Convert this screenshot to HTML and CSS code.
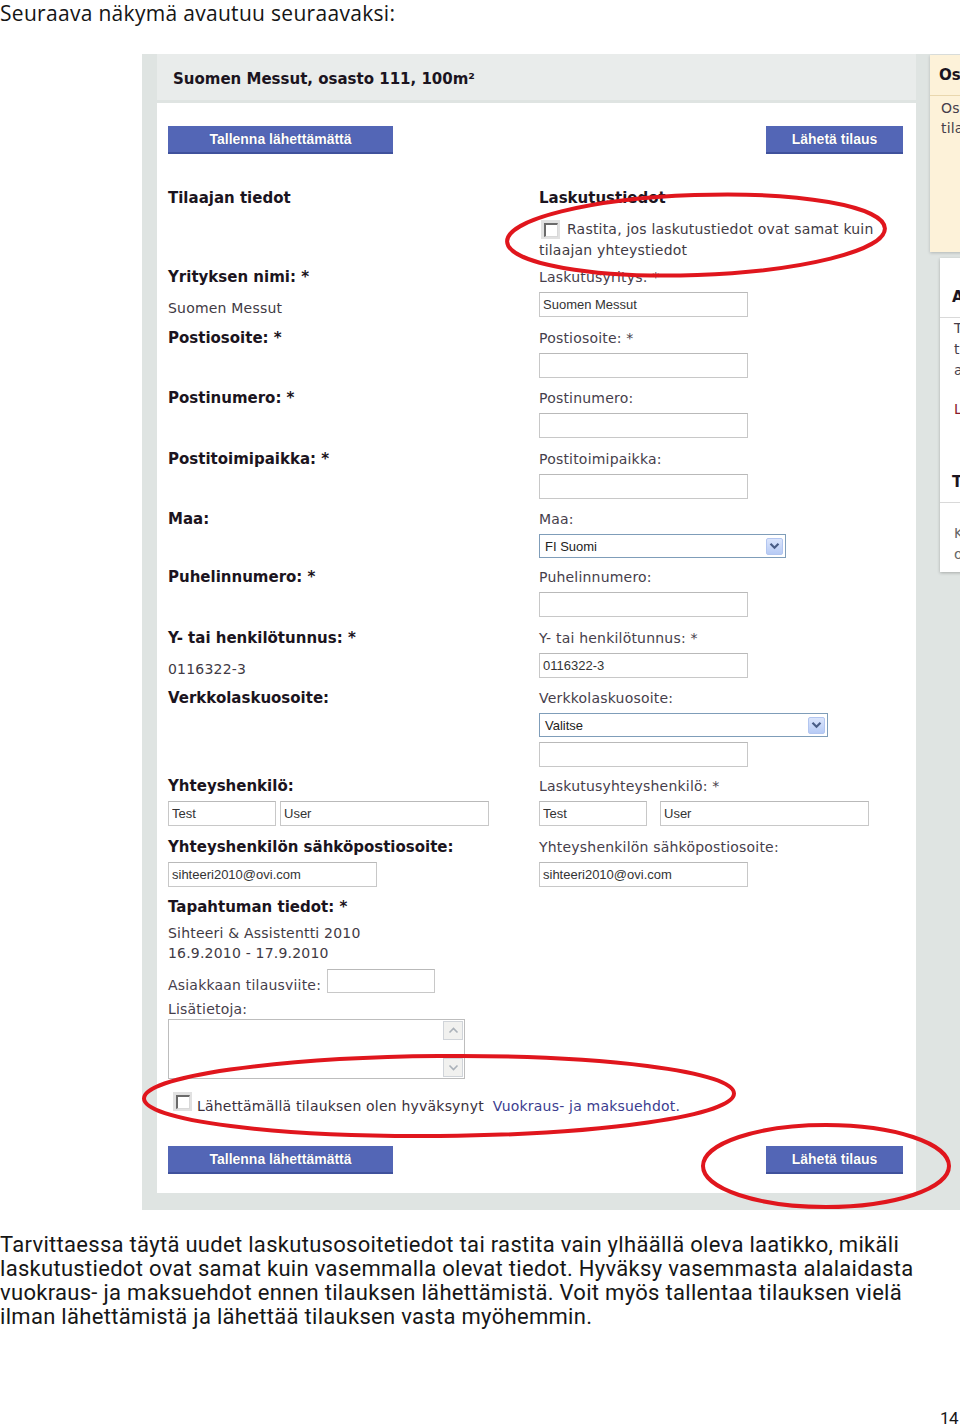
FILE: index.html
```html
<!DOCTYPE html>
<html lang="fi">
  <head>
    <meta charset="UTF-8" />
    <title>Osastotilaus</title>
    <link rel="stylesheet" href="styles.css">
  </head>
  <body>
    <p class="intro">Seuraava näkymä avautuu seuraavaksi:</p>

    <div class="shot">
      <div class="main">
        <div class="main-head">Suomen Messut, osasto 111, 100m²</div>
        <div class="main-body">
          <div class="actions">
            <button type="button" class="btn btn-save">Tallenna lähettämättä</button>
            <button type="button" class="btn btn-send">Lähetä tilaus</button>
          </div>

          <div class="form-grid">
            <div class="cell">
              <h3 class="section-title">Tilaajan tiedot</h3>
            </div>
            <div class="cell cell-first">
              <h3 class="section-title">Laskutustiedot</h3>
              <p class="check-line"><span class="check check-inline"></span>Rastita, jos laskutustiedot ovat samat kuin tilaajan yhteystiedot</p>
            </div>

            <div class="cell">
              <div class="label-strong">Yrityksen nimi: *</div>
              <div class="value">Suomen Messut</div>
            </div>
            <div class="field">
              <div class="field-label">Laskutusyritys: *</div>
              <input class="input" type="text" value="Suomen Messut" />
            </div>

            <div class="cell"><div class="label-strong">Postiosoite: *</div></div>
            <div class="field">
              <div class="field-label">Postiosoite: *</div>
              <input class="input" type="text" />
            </div>

            <div class="cell"><div class="label-strong">Postinumero: *</div></div>
            <div class="field">
              <div class="field-label">Postinumero:</div>
              <input class="input" type="text" />
            </div>

            <div class="cell"><div class="label-strong">Postitoimipaikka: *</div></div>
            <div class="field">
              <div class="field-label">Postitoimipaikka:</div>
              <input class="input" type="text" />
            </div>

            <div class="cell"><div class="label-strong">Maa:</div></div>
            <div class="field field-select">
              <div class="field-label">Maa:</div>
              <div class="select select-country">
                <span>FI Suomi</span>
                <span class="select-arrow"><svg width="11" height="8" viewBox="0 0 11 8"><path d="M1.5 1.8 L5.5 5.8 L9.5 1.8" fill="none" stroke="#4a5d86" stroke-width="2.2"/></svg></span>
              </div>
            </div>

            <div class="cell"><div class="label-strong">Puhelinnumero: *</div></div>
            <div class="field">
              <div class="field-label">Puhelinnumero:</div>
              <input class="input" type="text" />
            </div>

            <div class="cell">
              <div class="label-strong">Y- tai henkilötunnus: *</div>
              <div class="value">0116322-3</div>
            </div>
            <div class="field">
              <div class="field-label">Y- tai henkilötunnus: *</div>
              <input class="input" type="text" value="0116322-3" />
            </div>

            <div class="cell"><div class="label-strong">Verkkolaskuosoite:</div></div>
            <div class="field field-select">
              <div class="field-label">Verkkolaskuosoite:</div>
              <div class="select select-wide">
                <span>Valitse</span>
                <span class="select-arrow"><svg width="11" height="8" viewBox="0 0 11 8"><path d="M1.5 1.8 L5.5 5.8 L9.5 1.8" fill="none" stroke="#4a5d86" stroke-width="2.2"/></svg></span>
              </div>
              <input class="input input-after" type="text" />
            </div>

            <div class="field">
              <div class="label-strong label-gap">Yhteyshenkilö:</div>
              <div class="pair pair-tight">
                <input class="input input-short" type="text" value="Test" />
                <input class="input" type="text" value="User" />
              </div>
            </div>
            <div class="field">
              <div class="field-label">Laskutusyhteyshenkilö: *</div>
              <div class="pair">
                <input class="input input-short" type="text" value="Test" />
                <input class="input" type="text" value="User" />
              </div>
            </div>

            <div class="field">
              <div class="label-strong label-gap">Yhteyshenkilön sähköpostiosoite:</div>
              <input class="input input-mail" type="text" value="sihteeri2010@ovi.com" />
            </div>
            <div class="field">
              <div class="field-label">Yhteyshenkilön sähköpostiosoite:</div>
              <input class="input input-mail" type="text" value="sihteeri2010@ovi.com" />
            </div>
          </div>

          <div class="extra">
            <div class="label-strong">Tapahtuman tiedot: *</div>
            <div class="event-lines">Sihteeri &amp; Assistentti 2010<br>16.9.2010 - 17.9.2010</div>
            <div class="ref-row">
              <span class="ref-label">Asiakkaan tilausviite:</span>
              <input class="input input-ref" type="text" />
            </div>
            <div class="more-label">Lisätietoja:</div>
            <div class="textarea-box">
              <div class="scroll">
                <span class="scroll-btn"><svg width="11" height="7" viewBox="0 0 11 7"><path d="M1.5 5.5 L5.5 1.5 L9.5 5.5" fill="none" stroke="#aab1b9" stroke-width="1.6"/></svg></span>
                <span class="scroll-btn"><svg width="11" height="7" viewBox="0 0 11 7"><path d="M1.5 1.5 L5.5 5.5 L9.5 1.5" fill="none" stroke="#aab1b9" stroke-width="1.6"/></svg></span>
              </div>
            </div>
            <div class="terms">
              <span class="check check-terms"></span>
              <span>Lähettämällä tilauksen olen hyväksynyt</span>
              <a class="terms-link" href="#">Vuokraus- ja maksuehdot.</a>
            </div>
          </div>

          <div class="actions actions-bottom">
            <button type="button" class="btn btn-save">Tallenna lähettämättä</button>
            <button type="button" class="btn btn-send">Lähetä tilaus</button>
          </div>
        </div>
      </div>

      <div class="side">
        <div class="side-note">
          <div class="side-note-head">Osastotiedot</div>
          <div class="side-note-text">Osastonne<br>tilaus on kesken</div>
        </div>
        <div class="side-box">
          <div class="side-box-head">Apua tilaamiseen</div>
          <div class="side-box-text">Täytä tiedot<br>tilauslomakkeelle<br>ajoissa</div>
          <div class="side-box-link">Lue lisää</div>
          <div class="side-box-head side-box-head-2">Tuotteet</div>
          <div class="side-box-text side-box-text-2">Kaikki tuotteet<br>osastolle</div>
        </div>
      </div>
    </div>

    <p class="note">Tarvittaessa täytä uudet laskutusosoitetiedot tai rastita vain ylhäällä oleva laatikko, mikäli<br>laskutustiedot ovat samat kuin vasemmalla olevat tiedot. Hyväksy vasemmasta alalaidasta<br>vuokraus- ja maksuehdot ennen tilauksen lähettämistä. Voit myös tallentaa tilauksen vielä<br>ilman lähettämistä ja lähettää tilauksen vasta myöhemmin.</p>
    <div class="page-num">14</div>

    <!-- red marker rings drawn over the screenshot -->
    <svg class="marks" width="960" height="1428" viewBox="0 0 960 1428">
      <ellipse cx="696" cy="235" rx="189" ry="40" transform="rotate(-2 696 235)" />
      <ellipse cx="439" cy="1096" rx="295" ry="40" transform="rotate(-0.5 439 1096)" />
      <ellipse cx="826" cy="1166" rx="123" ry="41" />
    </svg>
  </body>
</html>
```

FILE: styles.css
```css
body {
  margin: 0;
  position: relative;
  background: #fff;
  color: #161616;
  font-family: "Open Sans", "Noto Sans", sans-serif;
  overflow: hidden;
}
.intro {
  margin: 0;
  font-size: 21px;
  line-height: 27px;
  letter-spacing: 0.3px;
  color: #151515;
}

/* screenshot frame */
.shot {
  display: flex;
  margin: 27px 0 0 142px;
  padding: 0 0 17px 15px;
  background: #dfe4e2;
  overflow: hidden;
  font-family: "DejaVu Sans", Verdana, sans-serif;
  font-size: 14px;
  letter-spacing: 0.2px;
  color: #463e4b;
}
.main {
  width: 759px;
  flex-shrink: 0;
}
.main-head {
  height: 46px;
  box-sizing: border-box;
  display: flex;
  align-items: center;
  padding: 3px 0 0 16px;
  background: #e9eceb;
  font-size: 15px;
  font-weight: bold;
  letter-spacing: 0;
  color: #1b1420;
}
.main-body {
  margin-top: 3px;
  background: #fff;
  padding: 23px 13px 19px 11px;
}
.actions {
  display: flex;
  justify-content: space-between;
}
.actions-bottom {
  margin-top: 30px;
}
.btn {
  height: 28px;
  padding: 0;
  border: none;
  border-bottom: 2px solid #3f519c;
  background: #5366b6;
  color: #fff;
  font-family: "Liberation Sans", Arial, sans-serif;
  font-size: 14px;
  font-weight: bold;
  text-shadow: 0 0 1px rgba(20, 30, 80, 0.5);
  cursor: pointer;
}
.btn-save {
  width: 225px;
}
.btn-send {
  width: 137px;
}

/* two column form */
.form-grid {
  display: grid;
  grid-template-columns: 371px 1fr;
  margin-top: 32px;
}
.section-title {
  margin: 0;
  font-size: 15px;
  line-height: 24px;
  font-weight: bold;
  letter-spacing: 0;
  color: #1b1420;
}
.cell-first {
  padding-bottom: 6px;
}
.check-line {
  margin: 9px 0 0;
  line-height: 21px;
  color: #3f3a44;
}
.check {
  display: inline-flex;
  width: 19px;
  height: 19px;
  background: #e1e1e1;
  box-sizing: border-box;
  padding: 3px 0 0 3px;
}
.check::after {
  content: "";
  width: 11px;
  height: 11px;
  background: #fff;
  border-top: 2px solid #6a6a6a;
  border-left: 2px solid #6a6a6a;
  border-right: 1px solid #d8d8d8;
  border-bottom: 1px solid #d8d8d8;
}
.check-inline {
  vertical-align: -3px;
  margin: 0 7px 0 2px;
}
.label-strong {
  font-size: 15px;
  line-height: 20px;
  font-weight: bold;
  letter-spacing: 0;
  color: #1b1420;
}
.label-gap {
  margin-bottom: 5px;
}
.value {
  margin-top: 11px;
  line-height: 20px;
  color: #3f3a44;
}
.field {
  padding-bottom: 10.5px;
}
.field-select {
  padding-bottom: 9px;
}
.field-label {
  line-height: 20px;
  margin-bottom: 5px;
}
.input {
  display: block;
  box-sizing: border-box;
  width: 209px;
  height: 25px;
  margin: 0;
  padding: 0 3px;
  border: 1px solid #c8c8c8;
  border-top-color: #b9b9b9;
  background: #fff;
  font-family: "Liberation Sans", Arial, sans-serif;
  font-size: 13px;
  color: #333;
}
.input-short {
  width: 108px;
}
.input-mail {
  width: 209px;
}
.input-after {
  margin-top: 5px;
}
.pair {
  display: flex;
  gap: 13px;
}
.pair-tight {
  gap: 4px;
}
.select {
  box-sizing: border-box;
  height: 24px;
  display: flex;
  align-items: center;
  justify-content: space-between;
  padding: 0 2px 0 5px;
  border: 1px solid #7f9db9;
  font-family: "Liberation Sans", Arial, sans-serif;
  font-size: 13px;
  letter-spacing: 0;
  color: #222;
}
.select-country {
  width: 247px;
}
.select-wide {
  width: 289px;
}
.select-arrow {
  width: 17px;
  height: 17px;
  display: flex;
  align-items: center;
  justify-content: center;
  box-sizing: border-box;
  border: 1px solid #b3c6f0;
  border-radius: 2px;
  background: linear-gradient(#dbe5fc, #b7cbf5);
}

/* left column only */
.event-lines {
  margin-top: 6px;
  line-height: 20px;
  color: #3f3a44;
}
.ref-row {
  display: flex;
  align-items: flex-end;
  margin-top: 6px;
}
.ref-label {
  line-height: 16px;
  margin-right: 6px;
}
.input-ref {
  width: 108px;
  height: 24px;
}
.more-label {
  margin-top: 6px;
  line-height: 20px;
}
.textarea-box {
  box-sizing: border-box;
  width: 297px;
  height: 60px;
  display: flex;
  justify-content: flex-end;
  border: 1px solid #bdbdbd;
  padding: 1px;
}
.scroll {
  width: 20px;
  display: flex;
  flex-direction: column;
  justify-content: space-between;
}
.scroll-btn {
  height: 19px;
  display: flex;
  align-items: center;
  justify-content: center;
  box-sizing: border-box;
  border: 1px solid #d0d4d9;
  background: #f1f1ef;
}
.terms {
  display: flex;
  align-items: flex-start;
  margin-top: 17px;
  line-height: 20px;
  color: #3a303c;
}
.check-terms {
  margin: -4px 5px 0 5px;
}
.terms-link {
  margin-left: 9px;
  color: #3c3d8f;
  text-decoration: none;
}

/* right hand panels, cut at the page edge */
.side {
  width: 220px;
  flex-shrink: 0;
  margin-left: 14px;
  padding-top: 1px;
}
.side-note {
  width: 200px;
  height: 197px;
  background: #fdf2d9;
  box-shadow: 0 1px 3px rgba(0, 0, 0, 0.2);
}
.side-note-head {
  height: 40px;
  display: flex;
  align-items: center;
  padding-left: 9px;
  border-bottom: 1px solid #e9d7ae;
  font-size: 15px;
  font-weight: bold;
  letter-spacing: 0;
  color: #1b1420;
}
.side-note-text {
  padding: 2px 11px 0;
  line-height: 20px;
}
.side-box {
  width: 200px;
  height: 314px;
  margin: 6px 0 0 10px;
  background: #fff;
  box-shadow: 0 1px 3px rgba(0, 0, 0, 0.25);
}
.side-box-head {
  padding: 29px 12px 10px;
  line-height: 20px;
  font-size: 15px;
  font-weight: bold;
  letter-spacing: 0;
  color: #1b1420;
  border-bottom: 1px solid #d9d9d9;
}
.side-box-head-2 {
  padding-top: 52px;
}
.side-box-text {
  padding-left: 14px;
  line-height: 21px;
}
.side-box-text-2 {
  padding-top: 20px;
  color: #666;
}
.side-box-link {
  margin-top: 18px;
  padding-left: 14px;
  line-height: 21px;
  color: #8a1a2a;
}

/* text under the screenshot */
.note {
  margin: 23px 0 0;
  font-family: Roboto, "Noto Sans", sans-serif;
  font-size: 22px;
  line-height: 24px;
  letter-spacing: 0.3px;
  color: #161616;
}
.page-num {
  margin-top: 79px;
  padding-right: 2px;
  text-align: right;
  font-family: Roboto, sans-serif;
  font-size: 17px;
  line-height: 20px;
  letter-spacing: -0.5px;
}
.marks {
  position: absolute;
  top: 0;
  left: 0;
  pointer-events: none;
}
.marks ellipse {
  fill: none;
  stroke: #e0161d;
  stroke-width: 4;
}
```
